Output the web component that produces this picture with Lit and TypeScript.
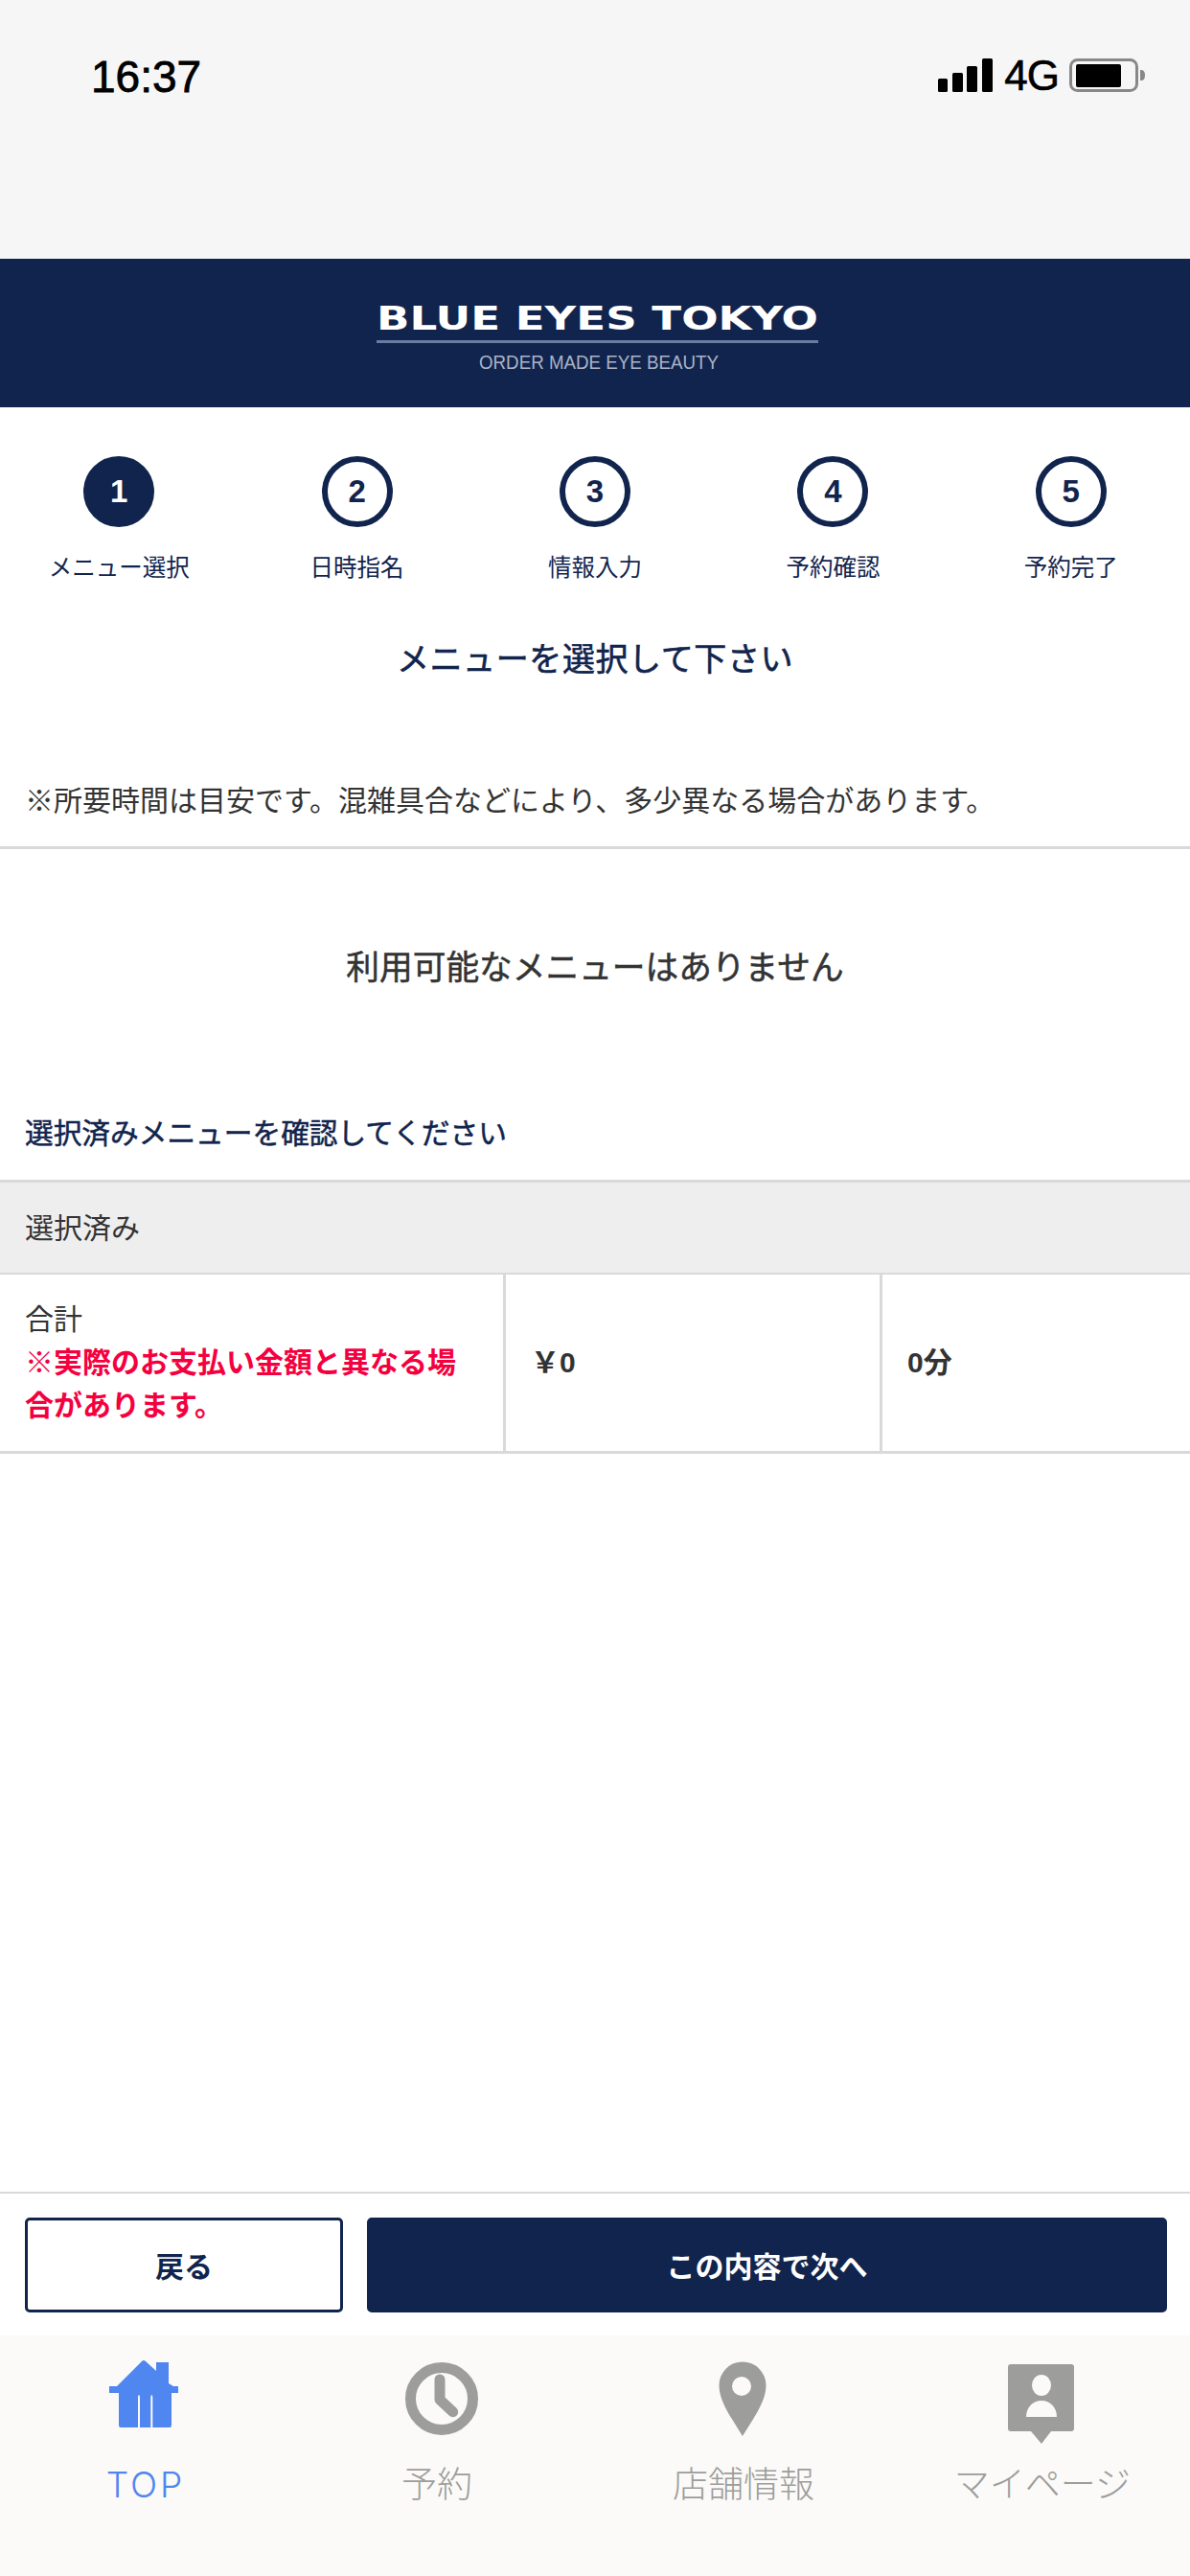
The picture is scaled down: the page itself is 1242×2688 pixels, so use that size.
import { LitElement, html, css, svg } from "lit";
import { customElement } from "lit/decorators.js";
import { classMap } from "lit/directives/class-map.js";

const STEPS = ["メニュー選択", "日時指名", "情報入力", "予約確認", "予約完了"];

const homeIcon = svg`
  <path d="M46 4 Q48 2 50 4 L61 14 V5 H74 V27 L79 30 H84 V37 H77 V71 Q77 73 75 73 H24 Q22 73 22 71 V37 H12 V30 H20 Z" />
  <path class="gap" d="M42 73 V42 Q42 39 43 39 Q44 39 44 42 V73 Z M55.3 73 V42 Q55.3 39 56.3 39 Q57.3 39 57.3 42 V73 Z" />
`;
const clockIcon = svg`
  <circle cx="55" cy="43" r="32.5" fill="none" stroke-width="11" />
  <path d="M53 23 V44 L66.7 56.7" fill="none" stroke-width="11" stroke-linecap="round" stroke-linejoin="round" />
`;
const pinIcon = svg`
  <path fill-rule="evenodd" d="M49 82 C38 64 24.500 46 24.500 29 A24.500 24.500 0 0 1 73.500 29 C73.500 46 60 64 49 82 Z M48 20 A10 10 0 1 0 48 40 A10 10 0 1 0 48 20 Z" />
`;
const personIcon = svg`
  <path d="M17 7 H80 Q83 7 83 10 V74 Q83 77 80 77 H59 L49 90 L38 77 H17 Q14 77 14 74 V10 Q14 7 17 7 Z" />
  <ellipse class="gap" cx="49" cy="29" rx="10" ry="11" />
  <path class="gap" d="M33 62 C33 52 40 45 49 45 S65 52 65 62 Z" />
`;

const TABS = [
  { label: "TOP", icon: homeIcon, active: true },
  { label: "予約", icon: clockIcon, active: false },
  { label: "店舗情報", icon: pinIcon, active: false },
  { label: "マイページ", icon: personIcon, active: false },
];

@customElement("app-root")
export class AppRoot extends LitElement {
  static styles = css`
    :host {
      display: flex;
      flex-direction: column;
      height: 2688px;
      background: #fff;
      color: #333;
      font-family: "Liberation Sans", "Noto Sans CJK JP", sans-serif;
    }

    /* status bar */
    .status {
      height: 270px;
      box-sizing: border-box;
      background: #f6f6f6;
      display: flex;
      align-items: flex-start;
      justify-content: space-between;
      padding: 54px 46px 0 95px;
      color: #000;
    }
    .time {
      font-size: 46px;
      line-height: 52px;
      -webkit-text-stroke: 0.8px #000;
    }
    .status-right {
      display: flex;
      align-items: flex-start;
      margin-top: 7px;
    }
    .net {
      font-size: 44px;
      line-height: 36px;
      margin: 0 11px 0 12px;
      letter-spacing: -1px;
      -webkit-text-stroke: 0.6px #000;
    }

    /* header logo */
    .header {
      height: 155px;
      background: #11244d;
      display: flex;
      align-items: center;
      justify-content: center;
    }
    .logo {
      display: block;
      margin: 7px 0 0 8px;
    }
    .logo-main {
      font-family: "DejaVu Sans", sans-serif;
      font-weight: 700;
      font-size: 34px;
      fill: #fff;
    }
    .logo-sub {
      font-family: "Liberation Sans", sans-serif;
      font-size: 21px;
      fill: #aab3c7;
    }
    .logo-rule {
      fill: #6b7ba0;
    }

    /* steps */
    .steps {
      display: grid;
      grid-template-columns: repeat(5, 1fr);
      padding-top: 51px;
    }
    .step {
      display: flex;
      flex-direction: column;
      align-items: center;
      color: #11244d;
    }
    .num {
      width: 74px;
      height: 74px;
      box-sizing: border-box;
      border: 6px solid #11244d;
      border-radius: 50%;
      display: flex;
      align-items: center;
      justify-content: center;
      font-size: 33px;
      font-weight: 700;
    }
    .num.on {
      background: #11244d;
      color: #fff;
    }
    .step-label {
      margin-top: 23px;
      font-size: 24.500px;
      line-height: 40px;
    }
    .title {
      margin: 50px 0 0;
      text-align: center;
      font-size: 34px;
      line-height: 50px;
      font-weight: 400;
      -webkit-text-stroke: 0.6px #11244d;
      color: #11244d;
      letter-spacing: 0.6px;
    }
    .note {
      margin: 101px 0 0;
      padding: 0 0 25px 26px;
      font-size: 30px;
      line-height: 44px;
      border-bottom: 3px solid #d9d9d9;
    }
    .empty {
      margin-top: 99px;
      text-align: center;
      font-size: 34.700px;
      line-height: 50px;
      -webkit-text-stroke: 0.5px #333;
    }
    .confirm {
      margin-top: 126px;
      padding-left: 26px;
      font-size: 29.700px;
      line-height: 44px;
      -webkit-text-stroke: 0.5px #11244d;
      color: #11244d;
    }

    /* selected table */
    .table-head {
      margin-top: 26px;
      height: 89px;
      box-sizing: content-box;
      border-top: 3px solid #d9d9d9;
      border-bottom: 2px solid #d9d9d9;
      background: #eee;
      display: flex;
      align-items: center;
      padding: 0 0 5px 26px;
      font-size: 30px;
    }
    .table-row {
      display: grid;
      grid-template-columns: 528px 393px 1fr;
      height: 184px;
      border-bottom: 3px solid #d9d9d9;
      font-size: 30px;
      line-height: 45px;
    }
    .cell {
      display: flex;
      flex-direction: column;
      justify-content: center;
      padding: 0 0 2px 26px;
      border-right: 3px solid #d9d9d9;
    }
    .cell:last-child {
      border-right: none;
    }
    .warn {
      color: #f5003f;
      font-weight: 700;
    }
    .strong {
      font-weight: 700;
    }
    .spacer {
      flex: 1;
    }

    /* action bar */
    .actions {
      display: flex;
      gap: 25px;
      border-top: 2px solid #d9d9d9;
      padding: 25px 24px 24px 26px;
    }
    .btn {
      height: 99px;
      box-sizing: border-box;
      border: 3px solid #11244d;
      border-radius: 5px;
      display: flex;
      align-items: center;
      justify-content: center;
      padding-bottom: 2px;
      font-size: 30px;
      font-weight: 700;
      color: #11244d;
    }
    .btn.back {
      width: 332px;
      background: #fff;
    }
    .btn.next {
      flex: 1;
      background: #11244d;
      color: #fff;
    }

    /* tab bar */
    .tabs {
      height: 251px;
      box-sizing: border-box;
      background: #fbfaf8;
      padding: 23px 10px 0 0;
      display: grid;
      grid-template-columns: 304px 304px 336px 288px;
      color: #9d9d9b;
    }
    .tab {
      display: flex;
      flex-direction: column;
      align-items: center;
    }
    .tab.on {
      color: #4f86ef;
    }
    .tab svg {
      display: block;
      fill: currentColor;
      stroke: currentColor;
      stroke-width: 0;
    }
    .tab .gap {
      fill: #fbfaf8;
    }
    .tab-label {
      margin-top: 13px;
      font-family: "Inter", "Noto Sans CJK JP", sans-serif;
      font-weight: 300;
      font-size: 37px;
      line-height: 50px;
      white-space: nowrap;
    }
    .tab.on .tab-label {
      letter-spacing: 3px;
    }
  `;

  private renderStatus() {
    return html`
      <div class="status">
        <div class="time">16:37</div>
        <div class="status-right">
          <svg width="58" height="36" viewBox="0 0 58 36">
            <rect x="1" y="21" width="10" height="14" rx="1.500" />
            <rect x="16" y="15" width="11" height="20" rx="1.500" />
            <rect x="31" y="8" width="11" height="27" rx="1.500" />
            <rect x="47" y="0" width="11" height="35" rx="1.500" />
          </svg>
          <div class="net">4G</div>
          <svg width="80" height="36" viewBox="0 0 80 36">
            <rect x="1.500" y="1.500" width="69" height="32" rx="7" fill="none" stroke="#888" stroke-width="3" />
            <rect x="7" y="6" width="47" height="24" rx="2" fill="#000" />
            <path d="M74 12 H75 Q79 12 79 17.500 Q79 23 75 23 H74 Z" fill="#888" />
          </svg>
        </div>
      </div>
    `;
  }

  private renderLogo() {
    return html`
      <svg class="logo" width="470" height="84" viewBox="0 0 470 84">
        <text class="logo-main" x="3" y="35" textLength="461" lengthAdjust="spacingAndGlyphs">BLUE EYES TOKYO</text>
        <rect class="logo-rule" x="3" y="46" width="461" height="3" />
        <text class="logo-sub" x="110" y="76" textLength="250" lengthAdjust="spacingAndGlyphs">ORDER MADE EYE BEAUTY</text>
      </svg>
    `;
  }

  render() {
    return html`
      ${this.renderStatus()}
      <div class="header">${this.renderLogo()}</div>

      <div class="steps">
        ${STEPS.map(
          (label, i) => html`
            <div class="step">
              <div class=${classMap({ num: true, on: i === 0 })}>${i + 1}</div>
              <div class="step-label">${label}</div>
            </div>
          `
        )}
      </div>

      <h1 class="title">メニューを選択して下さい</h1>
      <p class="note">※所要時間は目安です。混雑具合などにより、多少異なる場合があります。</p>
      <div class="empty">利用可能なメニューはありません</div>
      <div class="confirm">選択済みメニューを確認してください</div>

      <div class="table-head">選択済み</div>
      <div class="table-row">
        <div class="cell">
          <div>合計</div>
          <div class="warn">※実際のお支払い金額と異なる場<br />合があります。</div>
        </div>
        <div class="cell strong">￥0</div>
        <div class="cell strong">0分</div>
      </div>

      <div class="spacer"></div>

      <div class="actions">
        <div class="btn back">戻る</div>
        <div class="btn next">この内容で次へ</div>
      </div>

      <div class="tabs">
        ${TABS.map(
          (tab) => html`
            <div class=${classMap({ tab: true, on: tab.active })}>
              <svg width="100" height="95" viewBox="0 0 100 95">${tab.icon}</svg>
              <div class="tab-label">${tab.label}</div>
            </div>
          `
        )}
      </div>
    `;
  }
}
